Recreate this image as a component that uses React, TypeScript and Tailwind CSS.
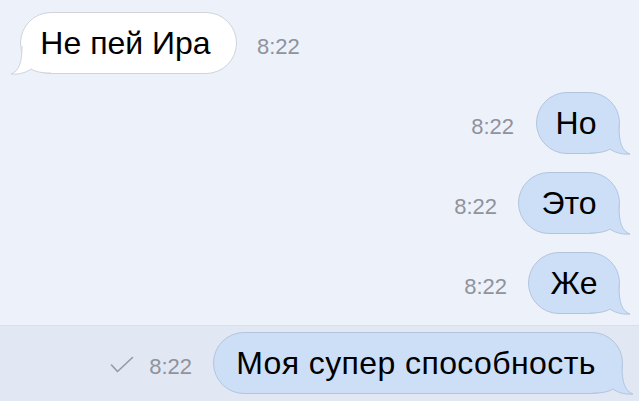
import React from "react";

type Side = "left" | "right";

function Tail({ side, fill, stroke }: { side: Side; fill: string; stroke: string }) {
  const d = "M 0,-27 C 0,-10 3,-2 11,1 C 5,1.8 -4,0 -9,-4 C -14,-1 -20,0 -29,0";
  return (
    <svg
      width="45"
      height="36"
      viewBox="-30 -31 45 36"
      className={
        side === "right"
          ? "absolute right-[-14.5px] bottom-[-4.5px]"
          : "absolute left-[-14.5px] bottom-[-4.5px] -scale-x-100"
      }
    >
      <path d={d + " L -29,-27 Z"} fill={fill} stroke="none" />
      <path d={d} fill="none" stroke={stroke} strokeWidth="1" />
    </svg>
  );
}

function Bubble({
  text,
  side,
  width,
  extra = "",
}: {
  text: string;
  side: Side;
  width: string;
  extra?: string;
}) {
  const blue = side === "right";
  const fill = blue ? "#cddff7" : "#ffffff";
  const stroke = blue ? "#b3c5de" : "#cfd3db";
  return (
    <div
      className={
        "relative h-[62px] rounded-[31px] border flex items-center justify-center text-[32px] leading-none text-black " +
        width +
        (blue ? " bg-[#cddff7] border-[#b3c5de]" : " bg-white border-[#cfd3db]")
      }
    >
      <Tail side={side} fill={fill} stroke={stroke} />
      <span className={"relative " + extra}>{text}</span>
    </div>
  );
}

function Time() {
  return <span className="text-[22px] leading-none text-[#8f939c]">8:22</span>;
}

export default function App() {
  return (
    <div
      className="w-[639px] h-[401px] overflow-hidden bg-[#edf1fa] flex flex-col"
      style={{ fontFamily: '"Liberation Sans", Arial, sans-serif' }}
    >
      <div className="flex flex-col gap-[18px] pt-[12px]">
        <div className="flex items-baseline gap-[20px] pl-[20px]">
          <Bubble text="Не пей Ира" side="left" width="w-[217px]" extra="mr-[6px]" />
          <Time />
        </div>
        <div className="flex items-baseline justify-end gap-[22px] pr-[19px]">
          <Time />
          <Bubble text="Но" side="right" width="w-[84px]" extra="mr-[4px]" />
        </div>
        <div className="flex items-baseline justify-end gap-[21px] pr-[19px]">
          <Time />
          <Bubble text="Это" side="right" width="w-[102px]" />
        </div>
        <div className="flex items-baseline justify-end gap-[21px] pr-[19px]">
          <Time />
          <Bubble text="Же" side="right" width="w-[92px]" />
        </div>
      </div>
      <div className="mt-[11px] flex-1 bg-[#e1e7f3] border-t border-[#d9dfeb] pt-[6px]">
        <div className="flex items-baseline justify-end pr-[16px]">
          <svg width="24" height="18" viewBox="0 0 24 18" className="mr-[15px] self-center mt-[4px]">
            <polyline
              points="1.5,9 7.5,15.5 22.5,1.5"
              fill="none"
              stroke="#959aa3"
              strokeWidth="1.6"
              strokeLinecap="round"
              strokeLinejoin="round"
            />
          </svg>
          <Time />
          <div className="w-[21px]" />
          <Bubble
            text="Моя супер способность"
            side="right"
            width="w-[410px]"
            extra="tracking-[0.4px] mr-[4px]"
          />
        </div>
      </div>
    </div>
  );
}
